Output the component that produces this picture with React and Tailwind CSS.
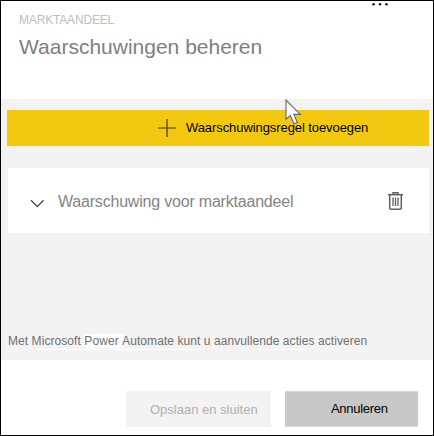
function Chevron() {
  return (
    <svg className="block h-[9px] w-[15px]" viewBox="0 0 15 9" fill="none" stroke="#505050" strokeWidth="1.4">
      <path d="M1 1.2 7.3 7.4 13.6 1.2" />
    </svg>
  );
}

function Trash() {
  return (
    <svg className="block h-[18px] w-[15px]" viewBox="0 0 15 18" fill="none" stroke="#606060">
      <path d="M0 2.7H15" strokeWidth="1.5" />
      <path d="M5 2.4V.7H10V2.4" strokeWidth="1.4" />
      <path d="M1.7 3V15.7Q1.7 17.2 3 17.2H12Q13.3 17.2 13.3 15.7V3" strokeWidth="1.5" />
      <path d="M5 5.5V14M7.5 5.5V14M10 5.5V14" strokeWidth="1.3" />
    </svg>
  );
}

export default function App() {
  return (
    <div className="relative flex h-[436px] w-[434px] flex-col overflow-hidden border border-black bg-white font-['Liberation_Sans',Arial,sans-serif] whitespace-nowrap">
      <header className="h-[98px] pt-[11px] pl-[18px]">
        <div className="text-[12px] leading-4 tracking-[-0.17px] text-[#bdbdbd]">MARKTAANDEEL</div>
        <h1 className="mt-[7px] text-[21px] leading-6 text-[#808080]">Waarschuwingen beheren</h1>
      </header>

      <main className="flex h-[261px] flex-col bg-[#f3f3f3] pt-[11px]">
        <button className="ml-1.5 flex h-9 w-[422px] items-center bg-[#f2c811] pl-[151px] text-black">
          <svg className="h-[18px] w-[18px]" viewBox="0 0 18 18" stroke="#40380c" strokeWidth="1.2">
            <path d="M0 9H18M9 0V18" />
          </svg>
          <span className="ml-2.5 text-[13px] leading-4 tracking-[-0.08px]">Waarschuwingsregel toevoegen</span>
        </button>
        <section className="mt-[22px] ml-[7px] flex h-[65px] w-[421px] items-center bg-white pl-[22px]">
          <div className="mt-1.5"><Chevron /></div>
          <span className="mt-0.5 ml-[13px] w-[330px] text-[16px] leading-5 tracking-[-0.2px] text-[#858585]">Waarschuwing voor marktaandeel</span>
          <Trash />
        </section>
        <p className="mt-[100px] pl-[7px] text-[12px] leading-4 tracking-[0.07px] text-[#6f6f6f]">
          Met Microsoft <span className="-mr-0.5 bg-white pr-0.5">Power </span>Automate kunt u aanvullende acties activeren
        </p>
        <div className="flex pl-9">
          <span className="h-px w-[164px] bg-white" />
          <span className="ml-[58px] h-px w-12 bg-white" />
        </div>
      </main>

      <footer className="flex pt-[31px] pl-[125px]">
        <button className="h-9 w-[145px] bg-[#f3f3f3] pt-px pl-6 text-left text-[13px] text-[#b0b0b0]">Opslaan en sluiten</button>
        <button className="ml-[14px] h-9 w-[133px] border-y border-[#d8d8d8] bg-[#c8c8c8] pl-[46px] text-left text-[13px] tracking-[-0.3px] text-black">Annuleren</button>
      </footer>

      <svg className="absolute top-0.5 left-[371px] h-[3px] w-[18px]" viewBox="0 0 18 3" fill="#111">
        <circle cx="1.5" cy="1.2" r="1.2" />
        <circle cx="8" cy="1.2" r="1.2" />
        <circle cx="14.5" cy="1.2" r="1.2" />
      </svg>
      <svg className="absolute top-[98px] left-[284px] h-[26px] w-[17px]" viewBox="0 0 17 26">
        <path d="M1 1V20.2L5.3 16.4 9 24.8 12.4 23.4 8.8 15.4H15.3Z" fill="#fff" stroke="#666" strokeWidth="1.1" />
      </svg>
    </div>
  );
}
